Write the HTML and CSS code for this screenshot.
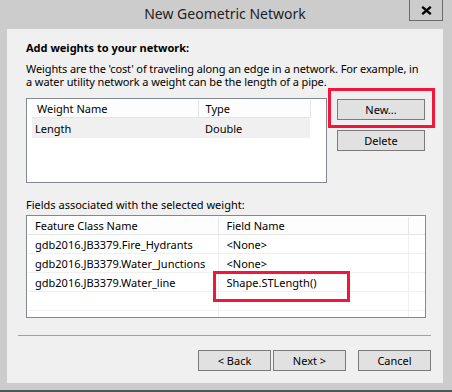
FILE: index.html
```html
<!DOCTYPE html>
<html lang="en">
<head>
  <meta charset="UTF-8" />
  <title>New Geometric Network</title>
  <link rel="stylesheet" href="styles.css">
</head>
<body>
  <div class="window">
    <div class="titlebar">
      <span class="title">New Geometric Network</span>
      <button class="close" aria-label="Close">
        <svg width="11" height="9" viewBox="0 0 11 9">
          <path d="M1.2 0.8 L9.8 8.2 M9.8 0.8 L1.2 8.2" stroke="#000" stroke-width="2.3" fill="none" />
        </svg>
      </button>
    </div>

    <div class="client">
      <div class="section">
        <h1>Add weights to your network:</h1>
        <p class="intro">Weights are the 'cost' of traveling along an edge in a network. For example, in<br>a water utility network a weight can be the length of a pipe.</p>

        <div class="weights-row">
          <div class="list list-weights">
            <table>
              <colgroup><col class="w-name"><col class="w-type"></colgroup>
              <tr><th>Weight Name</th><th>Type</th></tr>
              <tr class="selected"><td>Length</td><td>Double</td></tr>
            </table>
          </div>
          <div class="side-buttons">
            <div class="marked">
              <button class="btn">New...</button>
              <span class="highlight hl-new"></span>
            </div>
            <button class="btn">Delete</button>
          </div>
        </div>

        <p class="fields-label">Fields associated with the selected weight:</p>

        <div class="list list-fields">
          <table>
            <colgroup><col class="f-class"><col class="f-field"><col class="f-rest"></colgroup>
            <tr><th>Feature Class Name</th><th>Field Name</th><th></th></tr>
            <tr><td>gdb2016.JB3379.Fire_Hydrants</td><td>&lt;None&gt;</td><td></td></tr>
            <tr><td>gdb2016.JB3379.Water_Junctions</td><td>&lt;None&gt;</td><td></td></tr>
            <tr><td>gdb2016.JB3379.Water_line</td><td class="marked">Shape.STLength()<span class="highlight hl-field"></span></td><td></td></tr>
            <tr><td></td><td></td><td></td></tr>
            <tr><td></td><td></td><td></td></tr>
          </table>
        </div>
      </div>

      <hr class="sep">

      <div class="footer-buttons">
        <button class="btn">&lt; Back</button>
        <button class="btn">Next &gt;</button>
        <button class="btn btn-cancel">Cancel</button>
      </div>
    </div>
  </div>
  <div class="taskbar"></div>
</body>
</html>
```

FILE: styles.css
```css
body {
  margin: 0;
  background: #cccccc;
  font-family: "Noto Sans", "Open Sans", sans-serif;
  font-size: 11px;
  color: #000;
  width: 452px;
  height: 392px;
  overflow: hidden;
}

.window {
  height: 390px;
}

/* title bar */
.titlebar {
  display: grid;
  grid-template-areas: "bar";
  height: 29px;
}

.title {
  grid-area: bar;
  justify-self: center;
  font-size: 14px;
  line-height: 28px;
  color: #1e1e1e;
  margin-left: -2px;
}

.close {
  grid-area: bar;
  justify-self: end;
  align-self: start;
  margin-right: 9px;
  width: 34px;
  height: 21px;
  padding: 0;
  background: #cccccc;
  border: 1px solid #6b6b6b;
  border-top: none;
  display: flex;
  align-items: center;
  justify-content: center;
}

.client {
  margin-left: 7px;
  width: 436px;
  height: 354px;
  background: #f0f0f0;
  padding: 0 12px 0 11px;
  box-sizing: border-box;
}

.section {
  padding: 11px 5px 0 8px;
}

h1 {
  margin: 0;
  font-size: 11px;
  line-height: 15px;
  font-weight: bold;
}

.intro {
  margin: 7px 0 0 0;
  line-height: 13px;
  letter-spacing: -0.1px;
  white-space: nowrap;
}

.weights-row {
  display: flex;
  gap: 10px;
  margin-top: 10px;
}

/* list views */
.list {
  background: #fff;
  border: 1px solid #828790;
  padding: 1px 0 0 1px;
  box-sizing: border-box;
  overflow: hidden;
}

.list table {
  border-collapse: collapse;
  table-layout: fixed;
}

.list th {
  font-weight: normal;
  text-align: left;
  background: #fdfdfd;
  border-right: 1px solid #e5e5e5;
  border-bottom: 1px solid #e5e5e5;
  height: 17px;
  padding: 0 0 0 7px;
  white-space: nowrap;
}

.list td {
  padding: 0 0 0 7px;
  white-space: nowrap;
}

.list-weights {
  width: 301px;
  height: 85px;
}

.list-weights table {
  width: 280px;
}

.w-name { width: 168px; }
.w-type { width: 112px; }

.list-weights td {
  height: 20px;
}

.list-weights .selected td {
  background: #f0f0f0;
}

.list-weights .selected td:first-child {
  border-left: 4px solid #fff;
  padding-left: 3px;
}

.list-fields {
  width: 400px;
  height: 103px;
  margin-top: 3px;
}

.list-fields table {
  width: 398px;
}

.f-class { width: 190px; }
.f-field { width: 190px; }
.f-rest { width: 18px; }

.list-fields th:nth-child(2) {
  padding-left: 8px;
}

.list-fields td {
  height: 18px;
  border-right: 1px solid #f0f0f0;
  border-bottom: 1px solid #f0f0f0;
}

.list-fields td:nth-child(2) {
  padding-left: 8px;
}

.fields-label {
  margin: 14px 0 0 0;
  line-height: 15px;
}

/* buttons */
.side-buttons {
  display: flex;
  flex-direction: column;
  gap: 10px;
  padding-top: 1px;
}

.btn {
  font-family: inherit;
  font-size: 11px;
  color: #000;
  background: #e1e1e1;
  border: 1px solid #7a7a7a;
  width: 88px;
  height: 21px;
  padding: 0;
  line-height: 17px;
}

.footer-buttons .btn {
  width: 73px;
}

.marked {
  position: relative;
}

.highlight {
  position: absolute;
  border: 3px solid #f0163c;
  box-sizing: border-box;
  pointer-events: none;
}

.hl-new {
  left: -9px;
  top: -11px;
  width: 107px;
  height: 40px;
}

.hl-field {
  left: -6px;
  top: -2px;
  width: 137px;
  height: 31px;
}

.sep {
  margin: 17px 0 0 0;
  border: none;
  border-top: 1px solid #a0a0a0;
  height: 0;
}

.footer-buttons {
  display: flex;
  justify-content: flex-end;
  gap: 2px;
  margin-top: 14px;
}

.btn-cancel {
  margin-left: 10px;
}

.taskbar {
  height: 2px;
  background: #4b5858;
}
```
